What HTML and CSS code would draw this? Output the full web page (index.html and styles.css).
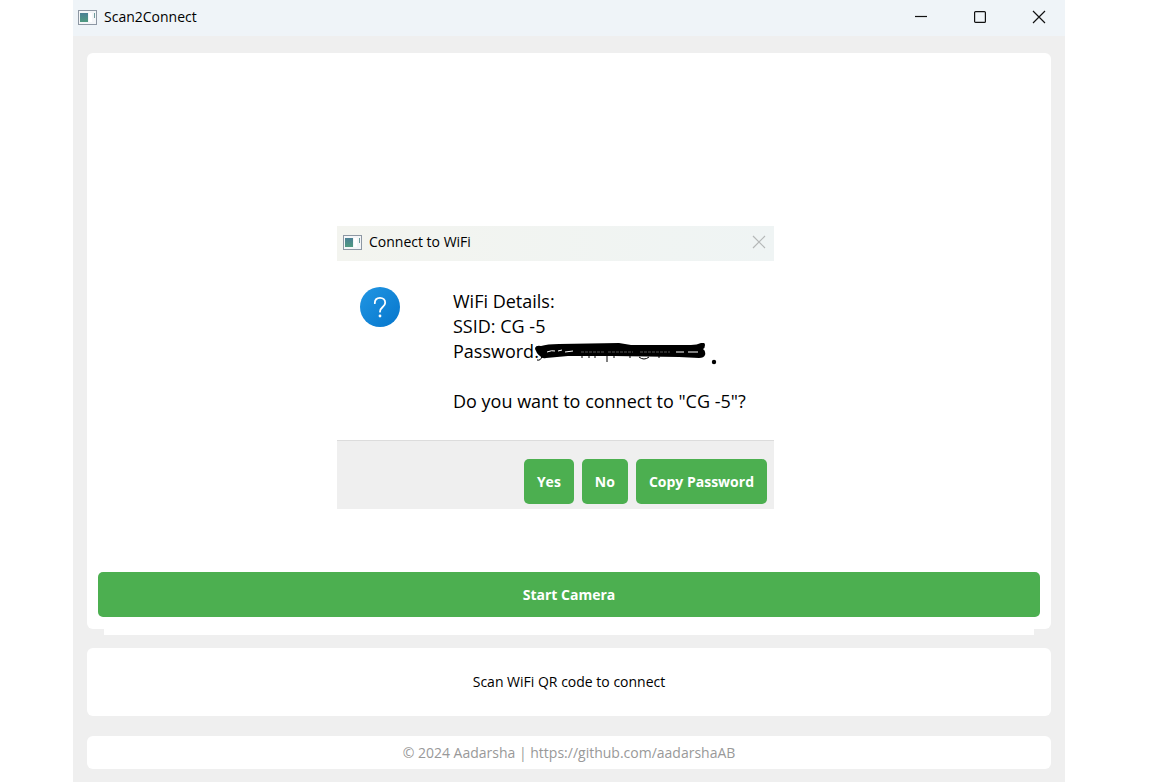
FILE: index.html
```html
<!DOCTYPE html>
<html lang="en">

<head>
  <meta charset="UTF-8">
  <meta name="viewport" content="width=device-width, initial-scale=1.0">
  <title>Scan2Connect</title>
  <link rel="stylesheet" href="styles.css">
</head>

<body>
  <div class="window">
    <header class="titlebar">
      <svg class="app-icon" width="19" height="15" viewBox="0 0 19 15">
        <rect x="0.5" y="0.5" width="18" height="14" fill="#f4f6f8" stroke="#8d97a3" />
        <rect x="2" y="3" width="8" height="9" fill="url(#teal)" />
        <rect x="11" y="3" width="3" height="9" fill="#fff" />
        <path d="M16.5 3v5" stroke="#6f9c9c" />
      </svg>
      <h1 class="title">Scan2Connect</h1>
      <div class="controls">
        <button class="control" aria-label="Minimize">
          <svg width="14" height="14" viewBox="0 0 14 14"><path d="M1 6.5h12" /></svg>
        </button>
        <button class="control" aria-label="Maximize">
          <svg width="14" height="14" viewBox="0 0 14 14"><rect x="1.6" y="1.6" width="10.8" height="10.8" rx="1" /></svg>
        </button>
        <button class="control" aria-label="Close">
          <svg width="14" height="14" viewBox="0 0 14 14"><path d="M1 1l12 12M13 1L1 13" /></svg>
        </button>
      </div>
    </header>

    <main class="content">
      <section class="camera">
        <button class="btn">Start Camera</button>

        <div class="dialog" role="dialog" aria-labelledby="dialog-title">
          <div class="dialog-bar">
            <svg class="app-icon" width="19" height="15" viewBox="0 0 19 15">
              <rect x="0.5" y="0.5" width="18" height="14" fill="#f4f6f8" stroke="#8d97a3" />
              <rect x="2" y="3" width="8" height="9" fill="url(#teal)" />
              <rect x="11" y="3" width="3" height="9" fill="#fff" />
              <path d="M16.5 3v5" stroke="#6f9c9c" />
            </svg>
            <h2 class="title" id="dialog-title">Connect to WiFi</h2>
            <button class="dialog-close" aria-label="Close">
              <svg width="14" height="14" viewBox="0 0 14 14"><path d="M1 1l12 12M13 1L1 13" /></svg>
            </button>
          </div>
          <div class="dialog-body">
            <svg class="question" width="40" height="40" viewBox="0 0 40 40">
              <defs>
                <linearGradient id="blue" x1="0" y1="0" x2="1" y2="1">
                  <stop offset="0" stop-color="#2196e3" />
                  <stop offset="1" stop-color="#0676cc" />
                </linearGradient>
                <linearGradient id="teal" x1="0" y1="0" x2="0" y2="1">
                  <stop offset="0" stop-color="#4a7f94" />
                  <stop offset="1" stop-color="#4f9a80" />
                </linearGradient>
              </defs>
              <circle cx="20" cy="20" r="20" fill="url(#blue)" />
              <path d="M14.8 16.2c0-3.4 2.2-5.4 5.2-5.4s5.2 2 5.2 4.9c0 4.4-5.2 4.3-5.2 9" fill="none" stroke="#fff" stroke-width="1.8" stroke-linecap="round" />
              <circle cx="20" cy="29" r="1.4" fill="#fff" />
            </svg>
            <div class="details">
              <p>WiFi Details:</p>
              <p>SSID: CG -5</p>
              <p class="password">Password:
                <svg class="scribble" width="186" height="26" viewBox="0 0 186 26">
                  <path d="M1 5q1-3 6-2q6-2 18-2l60-1l12 2l60 0q6 0 10-2q4-1 4 2q0 3-2 4q3 2 2 6q-1 3-6 3l-20-1l-65-1l-46 0l-22 2q-4 1-6-2q-4-3-5-8z" />
                  <path d="M13 9q5-2 8-1M24 8l4-1M31 9l8-1M142 9h8M154 9h10" fill="none" stroke="#fff" stroke-width="1" />
                  <path d="M47 9h24M74 9h25M106 9h30" fill="none" stroke="#555" stroke-width="1" stroke-dasharray="3 1" />
                  <path d="M3 17q4 1 5-4M48 12v3M55 12v3M61 12v3M73 12v7M80 12v3M96 12v3M105 14q5 4 10 0M125 12v3" fill="none" stroke="#000" stroke-width="1" />
                  <circle cx="180" cy="19" r="2.2" />
                </svg>
              </p>
              <p class="ask">Do you want to connect to "CG -5"?</p>
            </div>
          </div>
          <div class="dialog-actions">
            <button class="btn">Yes</button>
            <button class="btn">No</button>
            <button class="btn">Copy Password</button>
          </div>
        </div>
      </section>
      <div class="camera-edge"></div>

      <p class="status">Scan WiFi QR code to connect</p>
    </main>
    <footer class="footer">© 2024 Aadarsha | https://github.com/aadarshaAB</footer>
  </div>
</body>

</html>
```
FILE: styles.css
```css
* {
  box-sizing: border-box;
}

body {
  margin: 0;
  background: #fff;
  color: #000;
  font-family: "Open Sans", "Noto Sans", sans-serif;
  font-size: 14px;
  line-height: 20px;
}

h1,
h2,
p {
  margin: 0;
}

button {
  font-family: inherit;
  border: none;
  cursor: pointer;
}

.window {
  display: flex;
  flex-direction: column;
  min-height: calc(100vh - 1px);
  margin: 0 87px 0 73px;
  padding-bottom: 13px;
  background: #efefef;
}

.titlebar {
  display: flex;
  align-items: center;
  height: 36px;
  padding: 0 0 2px 5px;
  background: #eff4f8;
}

.title {
  margin-left: 7px;
  font-size: 14px;
  font-weight: 400;
}

.controls {
  display: flex;
  gap: 7px;
  margin-left: auto;
}

.control {
  display: flex;
  align-items: center;
  justify-content: center;
  width: 52px;
  height: 34px;
  padding: 0;
  background: none;
}

.control svg,
.dialog-close svg {
  fill: none;
  stroke: #111;
  stroke-width: 1.2;
}

.content {
  display: flex;
  flex: 1;
  flex-direction: column;
  padding: 17px 14px 0;
}

.camera {
  position: relative;
  display: flex;
  flex: 1;
  flex-direction: column;
  justify-content: flex-end;
  padding: 12px 11px;
  background: #fff;
  border-radius: 6px;
}

.camera-edge {
  height: 6px;
  margin: 0 17px 13px;
  background: #fff;
}

.btn {
  height: 45px;
  padding: 0 13px;
  border-radius: 5px;
  background: #4caf50;
  color: #fff;
  font-size: 14px;
  font-weight: 700;
}

.status,
.footer {
  background: #fff;
  border-radius: 6px;
  text-align: center;
}

.status {
  padding: 24px;
}

.footer {
  margin: 20px 14px 0;
  padding: 7px 6px 6px;
  color: #999;
}

/* message box floating over the camera view */
.dialog {
  position: absolute;
  top: 173px;
  left: 250px;
  width: 437px;
  background: #fff;
}

.dialog-bar {
  display: flex;
  align-items: center;
  height: 35px;
  padding: 0 8px 3px 6px;
  background: linear-gradient(90deg, #f3f4ef, #eff4f4);
}

.dialog-close {
  display: flex;
  margin-left: auto;
  padding: 0;
  background: none;
}

.dialog-close svg {
  stroke: #b5b8b8;
}

.dialog-body {
  display: flex;
  gap: 53px;
  padding: 26px 23px;
}

.details {
  padding-top: 2px;
  font-size: 18px;
  line-height: 25px;
}

.password {
  position: relative;
}

.scribble {
  position: absolute;
  top: 4px;
  left: 81px;
}

.ask {
  margin-top: 25px;
}

.dialog-actions {
  display: flex;
  justify-content: flex-end;
  gap: 8px;
  padding: 18px 7px 5px;
  background: #efefef;
  border-top: 1px solid #dcdcdc;
}
```
